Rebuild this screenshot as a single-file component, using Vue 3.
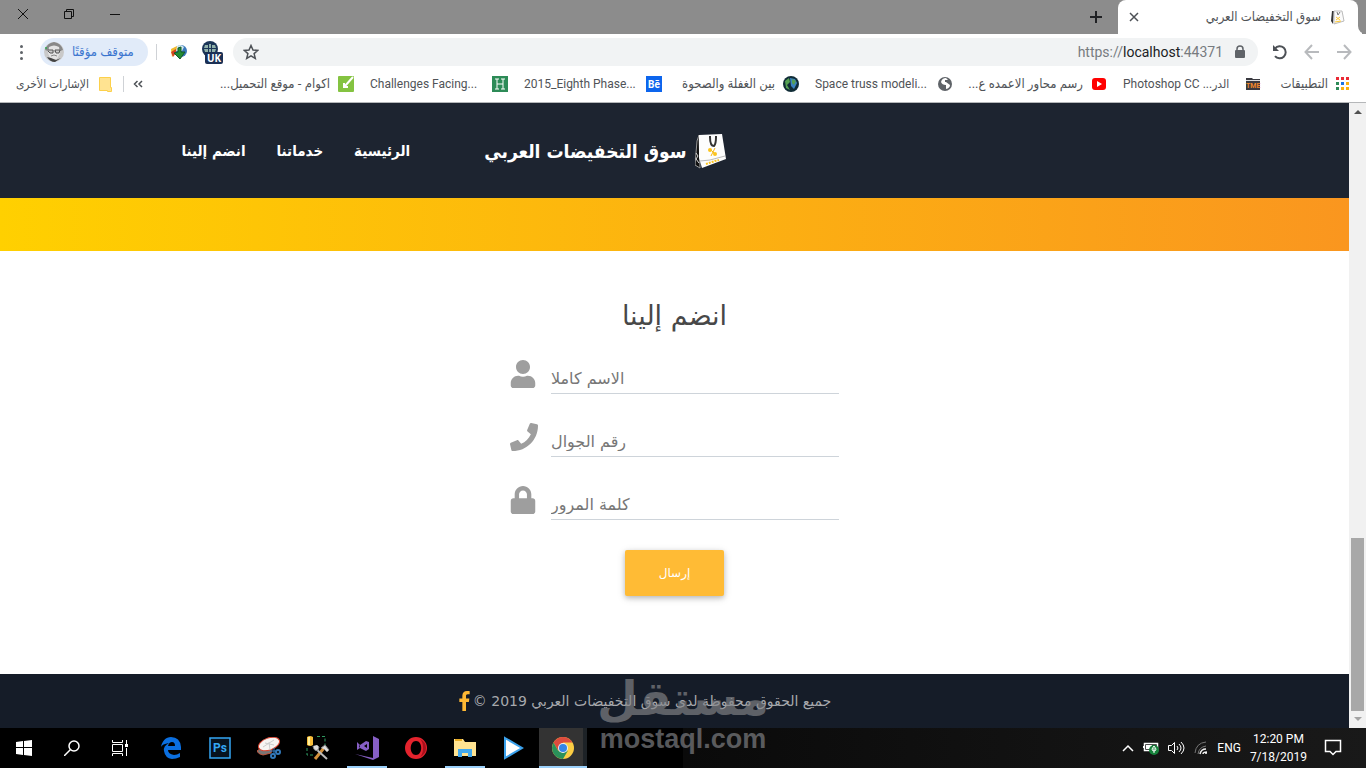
<script setup>
import { ref } from 'vue'

const bookmarks = [
  { label: 'اكوام - موقع التحميل...', icon: 'akoam', rtl: true },
  { label: 'Challenges Facing...', icon: 'hindawi' },
  { label: '2015_Eighth Phase...', icon: 'behance' },
  { label: 'بين الغفلة والصحوة', icon: 'earth', rtl: true },
  { label: 'Space truss modeli...', icon: 'globe' },
  { label: 'رسم محاور الاعمده ع...', icon: 'youtube', rtl: true },
  { label: 'Photoshop CC ...الدر', icon: 'tme' },
  { label: 'التطبيقات', icon: 'apps', rtl: true }
]
const appColors = ['#ea2a35', '#ea2a35', '#ea2a35', '#2d8b57', '#1a73e8', '#fbb010', '#2d8b57', '#fbb010', '#fbb010']

const nav = ['الرئيسية', 'خدماتنا', 'انضم إلينا']

const fields = [
  {
    id: 'full-name', label: 'الاسم كاملا', type: 'text', box: '0 0 448 512', narrow: true,
    path: 'M224 256c70.7 0 128-57.3 128-128S294.7 0 224 0 96 57.3 96 128s57.3 128 128 128zm89.6 32h-16.7c-22.2 10.2-46.9 16-72.9 16s-50.6-5.8-72.9-16h-16.7C60.2 288 0 348.2 0 422.4V464c0 26.5 21.5 48 48 48h352c26.5 0 48-21.5 48-48v-41.6c0-74.2-60.2-134.4-134.4-134.4z'
  },
  {
    id: 'mobile', label: 'رقم الجوال', type: 'tel', box: '0 0 512 512', narrow: false,
    path: 'M493.4 24.6l-104-24c-11.3-2.6-22.9 3.3-27.5 13.9l-48 112c-4.2 9.8-1.4 21.3 6.9 28l60.6 49.6c-36 76.7-98.9 140.5-177.2 177.2l-49.6-60.6c-6.8-8.3-18.2-11.1-28-6.9l-112 48C3.9 366.5-2 378.1.6 389.4l24 104C27.1 504.2 36.7 512 48 512c256.1 0 464-207.5 464-464 0-11.2-7.7-20.9-18.6-23.4z'
  },
  {
    id: 'password', label: 'كلمة المرور', type: 'password', box: '0 0 448 512', narrow: true,
    path: 'M400 224h-24v-72C376 68.2 307.8 0 224 0S72 68.2 72 152v72H48c-26.5 0-48 21.5-48 48v192c0 26.5 21.5 48 48 48h352c26.5 0 48-21.5 48-48V272c0-26.5-21.5-48-48-48zm-104 0H152v-72c0-39.7 32.3-72 72-72s72 32.3 72 72v72z'
  }
]
const values = ref({ 'full-name': '', mobile: '', password: '' })
</script>

<template>
  <div class="desktop">
    <div class="tabstrip">
      <div class="controls">
        <button aria-label="إغلاق"><svg width="12" height="12"><path d="M1 1l10 10M11 1L1 11" /></svg></button>
        <button aria-label="استعادة"><svg width="12" height="12"><path d="M1.500 3.500h7v7h-7zM3.500 3.500v-2h7v7h-2" /></svg></button>
        <button aria-label="تصغير"><svg width="12" height="12"><path d="M1 6.500h10" /></svg></button>
      </div>
      <button class="newtab" aria-label="علامة تبويب جديدة"><svg width="12" height="12"><path d="M6 0v12M0 6h12" /></svg></button>
      <div class="tab">
        <button class="tabclose" aria-label="إغلاق علامة التبويب"><svg width="10" height="10"><path d="M1 1l8 8M9 1L1 9" /></svg></button>
        <span class="tabtitle">سوق التخفيضات العربي</span>
        <svg class="favicon" width="16" height="16" viewBox="0 0 16 16"><path d="M2 2l-1 10 2 3 1-13z" fill="#333" /><path d="M4 2h8l2 10-10 3z" fill="#fafafa" stroke="#bbb" /><path d="M7 3l1 3 2-3" fill="none" stroke="#777" /><path d="M6 8l4 3M10 8l-4 3M5 13l6-1" stroke="#ffc933" /></svg>
      </div>
      <div class="tabend"></div>
    </div>

    <div class="toolbar">
      <button class="menu" aria-label="القائمة"><i></i><i></i><i></i></button>
      <button class="profile">
        <svg width="20" height="20" viewBox="0 0 20 20"><circle cx="10" cy="10" r="10" fill="#c9c9c9" /><path d="M1 8Q3 1 10 0q7 1 9 8l-3 1-2-4H7L4 9z" fill="#888" /><path d="M5 5q5-3 10 0l1 6-3 6-3 1-4-2-2-5z" fill="#e3e3e3" /><path d="M4 8h5v3H6L4 9M11 8h5l-1 3h-3z" fill="#ccc" stroke="#555" /><path d="M9 9h2M7 14q3-2 6 0" fill="none" stroke="#888" /><path d="M3 15q3 5 8 5l6-4-5 2-5-2z" fill="#444" /><circle cx="2" cy="6" r="1" fill="#35a853" /></svg>
        <span>متوقف مؤقتًا</span>
      </button>
      <span class="rule"></span>
      <svg class="idm" width="18" height="18" viewBox="0 0 18 18"><circle cx="11" cy="8" r="6" fill="#3978bc" /><path d="M6 4q4-4 8 0l-2 4H6z" fill="#cee7ed" /><path d="M1 6l6-3-1 6-4 5z" fill="#f2b92b" /><path d="M1 9l5-3v4l-3 4z" fill="#d24521" /><path d="M8 5l3-1v5h4l-5 7-6-6 4-1z" fill="#218b32" stroke="#15562a" /></svg>
      <div class="ukext">
        <svg width="18" height="18" viewBox="0 0 18 18"><circle cx="9" cy="9" r="8" fill="#1b3557" /><path d="M4 5h3v3H3zM8 4h2v4H8zM11 5h3l1 3h-4zM3 9h4v3H4zM8 9h2v3H8zM11 9h4l-1 3h-3z" fill="#8fb0a9" /></svg>
        <b>UK</b>
      </div>
      <div class="omnibox">
        <svg width="16" height="16" viewBox="0 0 16 16"><path d="M8 1.500l2 4.500 4.800.4-3.700 3.200 1.200 4.800L8 11.800l-4.300 2.600 1.200-4.800L1.200 6.400 6 6z" fill="none" stroke="#4d5156" stroke-width="1.500" /></svg>
        <span class="url">https://<b>localhost</b>:44371</span>
        <svg width="10" height="14" viewBox="0 0 10 14"><path d="M1 6h8v6H1z" fill="#5f6368" stroke="#5f6368" stroke-width="2" stroke-linejoin="round" /><path d="M2 6V4q0-3 3-3t3 3v2" fill="none" stroke="#5f6368" stroke-width="1.500" /></svg>
      </div>
      <div class="navicons">
        <button aria-label="إعادة تحميل"><svg width="16" height="16" viewBox="0 0 16 16"><path d="M3 4.500A6 6 0 1 1 3 12" stroke="#4d5156" stroke-width="2" fill="none" /><path d="M1 1v6h6z" fill="#4d5156" /></svg></button>
        <button aria-label="للأمام"><svg width="16" height="16" viewBox="0 0 16 16"><path d="M15 8H2M8 1L1.500 8 8 15" fill="none" stroke="#b8babd" stroke-width="2" /></svg></button>
        <button aria-label="للخلف"><svg width="16" height="16" viewBox="0 0 16 16"><path d="M1 8h13M8 1l6.500 7L8 15" fill="none" stroke="#b8babd" stroke-width="2" /></svg></button>
      </div>
    </div>

    <div class="bookmarks">
      <a class="other" href="#other"><span>الإشارات الأخرى</span><svg width="13" height="15" viewBox="0 0 13 15"><path d="M.5.5h11v10h1v4h-4v-1h-8z" fill="#ffe391" stroke="#fcd04b" /></svg></a>
      <span class="rule"></span>
      <button class="more" aria-label="المزيد"><svg width="10" height="8" viewBox="0 0 10 8"><path d="M4.500 1l-3 3 3 3M9 1L6 4l3 3" fill="none" stroke="#4d5156" stroke-width="1.500" /></svg></button>
      <div class="marks">
        <a v-for="b in bookmarks" :key="b.icon" href="#bookmark" :class="['mark', b.icon]">
          <span :class="{ rtl: b.rtl }">{{ b.label }}</span>
          <svg v-if="b.icon === 'akoam'" width="16" height="16"><rect width="16" height="16" rx="1" fill="#84c341" /><path d="M6 7v4h4M15 1L7 10" stroke="#fff" stroke-width="2" fill="none" /></svg>
          <svg v-else-if="b.icon === 'hindawi'" width="16" height="16"><rect width="16" height="16" fill="#2d8b57" /><path d="M5 3v10M11 3v10M5 8h6M3 3h4M9 3h4M3 13h4M9 13h4" stroke="#fff" /></svg>
          <svg v-else-if="b.icon === 'behance'" width="16" height="16"><rect width="16" height="16" fill="#0d65ed" /><text x="2" y="12" font-size="10" font-weight="700" fill="#fff">Bē</text></svg>
          <svg v-else-if="b.icon === 'earth'" width="16" height="16"><circle cx="8" cy="8" r="8" fill="#102c36" /><path d="M7 2l5 1 2 4-3 6-3-3z" fill="#3c83bf" /><path d="M2 5l4-3 1 4-3 3 3 5-4-2zM9 3l4 2-2 4-2-2z" fill="#55a052" /></svg>
          <svg v-else-if="b.icon === 'globe'" width="16" height="16"><circle cx="8" cy="8" r="7" fill="#5f6368" /><path d="M9 2q-4 0-5 4 1 3 5 3v4q4-1 4-4l-4-3H8V4h3" fill="#fff" /></svg>
          <svg v-else-if="b.icon === 'youtube'" width="16" height="16"><rect x="1" y="2" width="14" height="12" rx="3" fill="#f00" /><path d="M6 5l5 3-5 3z" fill="#fff" /></svg>
          <svg v-else-if="b.icon === 'tme'" width="16" height="16"><path d="M1 2h6l1 1h7v11H1z" fill="#3a3a40" /><path d="M1 4.500h14" stroke="#ddd" /><text x="1" y="12" font-size="7" font-weight="700" fill="#f0872b">TME</text></svg>
          <svg v-else width="14" height="14" viewBox="0 0 14 14"><rect v-for="(c, i) in appColors" :key="i" :x="(i % 3) * 5" :y="Math.floor(i / 3) * 5" width="3" height="3" :fill="c" /></svg>
        </a>
      </div>
    </div>

    <div class="viewport">
      <div class="page">
        <header class="sitehead" dir="rtl">
          <a class="brand" href="#home">
            <svg width="31" height="36" viewBox="0 0 31 36"><path d="M4 2L2 8 0 32l5 3z" fill="#111" stroke="#999" stroke-width="1" /><path d="M4 2L27 1l4 25-24 9-3-10z" fill="#fdfdfd" /><path d="M5 28l10-1 15-4" fill="none" stroke="#bbb" /><path d="M15 4q0 9 4 9 2-2 2-9M16 4h-2M20 4h2" fill="none" stroke="#333" stroke-width="2" /><path d="M15 16l6 6M20 15l-4 8" stroke="#f6b716" /><circle cx="15" cy="17" r="2" fill="#fbc51f" /><circle cx="20" cy="21" r="2" fill="#fbc51f" /><path d="M11 31l3-1 3-1 3-1 4-1" fill="none" stroke="#fbc51f" stroke-width="2" stroke-dasharray="2 1" /><path d="M1 20l2 3-2 3 3 4" stroke="#ddd" fill="none" /></svg>
            <span>سوق التخفيضات العربي</span>
          </a>
          <nav><a v-for="n in nav" :key="n" href="#section">{{ n }}</a></nav>
        </header>
        <div class="banner"></div>
        <main>
          <form @submit.prevent>
            <h1>انضم إلينا</h1>
            <div v-for="f in fields" :key="f.id" class="field">
              <label :for="f.id" :aria-label="f.label"><svg :width="f.narrow ? 26 : 28" height="28" :viewBox="f.box"><path :d="f.path" fill="#9e9e9e" /></svg></label>
              <input :id="f.id" v-model="values[f.id]" :type="f.type" :placeholder="f.label">
            </div>
            <button class="send" type="submit">إرسال</button>
          </form>
        </main>
        <footer>
          <a href="#facebook" aria-label="facebook"><svg width="11" height="20" viewBox="0 0 264 512"><path fill="#ffb934" d="M76.700 512V283H0v-91h76.700v-71.700C76.700 42.400 124.300 0 193.800 0c33.300 0 61.900 2.500 70.200 3.600V85h-48.200c-37.800 0-45.100 18-45.100 44.300V192H256l-11.700 91h-73.600v229" /></svg></a>
          <span dir="rtl">جميع الحقوق محفوظة لدى سوق التخفيضات العربي 2019 ©</span>
        </footer>
      </div>
      <div class="scrollbar">
        <svg width="8" height="4"><path d="M0 4l4-4 4 4z" fill="#505050" /></svg>
        <div class="thumb"></div>
        <svg width="8" height="4"><path d="M0 0l4 4 4-4z" fill="#a3a3a3" /></svg>
      </div>
    </div>

    <div class="taskbar">
      <div class="system">
        <button aria-label="Start"><svg width="16" height="16" fill="#fff"><path d="M0 2l7-1v6H0zM8 1l8-1v7H8zM0 8h7v7l-7-1zM8 8h8v8l-8-1z" /></svg></button>
        <button aria-label="Search"><svg width="16" height="16" fill="none" stroke="#fff" stroke-width="1.500"><circle cx="10" cy="6" r="5" /><path d="M6.500 9.500L0 16" /></svg></button>
        <button aria-label="Task view"><svg width="16" height="16" fill="none" stroke="#fff"><path d="M.5 0v2.500h10V0M.5 4.500h10v7H.500zM.5 16v-2.500h10V16M14.500 0v4M14.500 8v8" /><path d="M13 4h3v3h-3z" fill="#fff" stroke="none" /></svg></button>
      </div>
      <div class="apps">
        <button aria-label="Edge"><svg width="20" height="22" viewBox="0 0 20 22"><path d="M0 10C1 4 5 0 10 0q9 0 10 10v3H7q0 4 6 5 3 0 6-2v4q-4 2-8 2-7-1-8-8-1-5 5-8-7 1-8 4M7 9h7q0-4-3-4T7 9" fill="#0b6fe0" fill-rule="evenodd" /></svg></button>
        <button aria-label="Photoshop"><svg width="22" height="22"><rect x="1" y="1" width="20" height="20" fill="#07131f" stroke="#34a7f4" stroke-width="1.500" /><text x="4" y="15" font-size="12" font-weight="700" fill="#34a7f4">Ps</text></svg></button>
        <button aria-label="Snipping tool"><svg width="24" height="22" viewBox="0 0 24 22"><path d="M0 14l7-5 8 3-1 4-8 2q-5-1-6-4" fill="#777" stroke="#c0563e" /><ellipse cx="12" cy="7" rx="11" ry="6" transform="rotate(-20 12 7)" fill="#f7f4f2" stroke="#d7422f" /><path d="M6 10l11-7M12 5l1 8M8 6l9 2" stroke="#ccc" /><circle cx="16" cy="19" r="2" fill="none" stroke="#3279ba" stroke-width="2" /><circle cx="21" cy="15" r="2" fill="none" stroke="#3279ba" stroke-width="2" /><path d="M13 14h6M17 11v7" stroke="#3279ba" /></svg></button>
        <button aria-label="Tools"><svg width="24" height="24" viewBox="0 0 24 24"><path d="M1 1q3-2 6 0v8q-3 2-6 0z" fill="#f8bd3a" /><path d="M3 1v8" stroke="#fff09a" stroke-width="2" /><path d="M11 .5h8V9M1 12v7h6" fill="none" stroke="#2f9960" stroke-dasharray="3 2" /><path d="M9 23l9-11" stroke="#d4913c" stroke-width="3" /><path d="M10 13l11 10" stroke="#bbb" stroke-width="2" /><path d="M7 10q1 6 5 4l1-3-2-2M15 12l4-3 4 5-2 2-3-3" fill="#ddd" stroke="#888" /></svg></button>
        <button class="open" aria-label="Visual Studio"><svg width="24" height="24" viewBox="0 0 24 24" fill="none"><path d="M18 0l6 3v18l-6 3zM0 18l18 4v2z" fill="#865fc5" /><path d="M2 6v8l3-2 6 3 3-2V6l-3-1-6 4z" fill="#865fc5" /><path d="M4 9v3l1-2zM12 8l-3 2 3 2z" fill="#000" /></svg></button>
        <button aria-label="Opera"><svg width="22" height="22"><path d="M11 0a11 11 0 1 0 0 22 11 11 0 1 0 0-22M11 4c7 0 7 14 0 14S4 4 11 4" fill="#e4232d" fill-rule="evenodd" /><path d="M15 2q6 3 6 9t-6 9q3-3 3-9t-3-9" fill="#a70f1c" /></svg></button>
        <button class="open" aria-label="Explorer"><svg width="22" height="19" viewBox="0 0 22 19"><path d="M0 0h9l2 3h11v14H0z" fill="#ffe391" /><path d="M1 1h7" stroke="#e8ac25" stroke-width="2" /><path d="M4 18v-8h14v8h-4v-4H8v4z" fill="#42a9ee" /></svg></button>
        <button aria-label="Player"><svg width="24" height="24"><path d="M3 2l17 10L3 22z" fill="#fff" stroke="#3ba2ed" stroke-width="2" /></svg></button>
        <button class="open active" aria-label="Chrome"><svg width="22" height="22" viewBox="0 0 22 22"><circle cx="11" cy="11" r="11" fill="#fccd43" /><path d="M1.500 5.500A11 11 0 0 1 20.500 5.500H11L6.200 13.700z" fill="#dd4c3e" /><path d="M1.500 5.500A11 11 0 0 0 11 22l5-8.500-5 2-5-2z" fill="#2a915a" /><circle cx="11" cy="11" r="5" fill="#eee" /><circle cx="11" cy="11" r="4" fill="#3585e6" /></svg></button>
      </div>
      <div class="tray">
        <svg width="12" height="8"><path d="M1 7l5-5 5 5" fill="none" stroke="#fff" stroke-width="1.500" /></svg>
        <svg width="16" height="14"><path d="M1.500 2.500h13v7h-13zM0 5v2" fill="none" stroke="#fff" stroke-width="1.500" /><path d="M3 4h6v4H3z" fill="#fff" /><circle cx="11" cy="9" r="5" fill="#16823b" /><path d="M11 12V7M9 8q0 2 2 2 2 0 2-2l-2-3z" stroke="#fff" fill="none" /></svg>
        <svg width="17" height="14" fill="none" stroke="#fff"><path d="M.5 4.500h3l3-3v11l-3-3h-3zM9 5q2 2 0 4M11 3q4 4 0 8M13 1q6 6 0 12" /></svg>
        <svg width="14" height="14" fill="none"><path d="M1 12Q2 2 12 1M4 13Q5 6 12 5" stroke="#777" /><path d="M6 13q1-5 6-5M9 13q0-2 4-2" stroke="#eee" stroke-width="1.500" /><circle cx="12" cy="12" r="1" fill="#fff" /></svg>
        <span>ENG</span>
        <time>12:20 PM<br>7/18/2019</time>
        <svg width="18" height="18"><path d="M1.500 1.500h15v11H12l-3 3-3-3H1.500z" fill="none" stroke="#fff" stroke-width="1.500" /></svg>
      </div>
    </div>

    <div class="watermark"><strong dir="rtl">مستقل</strong><span>mostaql.com</span></div>
  </div>
</template>

<style>
body { margin: 0; background: #fff; }
</style>

<style scoped>
* { box-sizing: border-box; }
.desktop { position: relative; display: flex; flex-direction: column; min-height: 100vh; overflow: hidden; font: 12px/16px Roboto, "DejaVu Sans Condensed", sans-serif; color: #505357; }
button { padding: 0; border: 0; background: none; color: inherit; font: inherit; }
a { color: inherit; text-decoration: none; }
svg { display: block; flex: none; }
.rule { width: 1px; height: 16px; background: #cfd2d6; }

.tabstrip { display: flex; height: 34px; background: #8c8c8c; }
.controls { display: flex; flex: 1; height: 28px; }
.controls button { display: grid; place-items: center; width: 46px; }
.controls path { fill: none; stroke: #111; }
.newtab { width: 44px; display: grid; place-items: center; }
.newtab path { stroke: #202124; stroke-width: 2; }
.tab { display: flex; align-items: center; width: 240px; padding: 0 12px 0 11px; background: #fff; border-radius: 8px 8px 0 0; }
.tabclose path { stroke: #4d5156; stroke-width: 1.5; }
.tabtitle { flex: 1; text-align: right; font-size: 13px; }
.favicon { margin-left: 9px; }
.tabend { width: 8px; border-bottom-left-radius: 8px; box-shadow: -4px 4px 0 #fff; clip-path: inset(0); }

.toolbar { display: flex; align-items: center; height: 36px; padding: 0 14px 0 17px; }
.menu { display: grid; gap: 3px; width: 9px; justify-content: center; }
.menu i { width: 3px; height: 3px; border-radius: 50%; background: #5f6368; }
.profile { display: flex; align-items: center; gap: 8px; width: 108px; height: 28px; margin: 0 8px 0 14px; padding-left: 4px; border-radius: 14px; background: #e1ebf9; color: #3b75cf; font-size: 13px; white-space: nowrap; }
.idm { margin-left: 13px; }
.ukext { position: relative; width: 24px; height: 24px; margin: 0 8px 0 13px; }
.ukext b { position: absolute; left: 4px; top: 12px; width: 18px; height: 12px; border-radius: 2px; background: #1b3055; color: #fff; font: 700 10px/12px "Open Sans", sans-serif; text-align: center; }
.omnibox { display: flex; flex: 1; align-items: center; height: 28px; padding: 0 13px 0 10px; border-radius: 14px; background: #f1f3f4; }
.url { flex: 1; margin-right: 12px; text-align: right; font-size: 14px; line-height: 20px; color: #777b7f; }
.url b { font-weight: 400; color: #202124; }
.navicons { display: flex; gap: 16px; margin-left: 14px; }

.bookmarks { display: flex; align-items: center; height: 33px; padding: 0 16px 6px 14px; border-bottom: 1px solid #b5b7b9; white-space: nowrap; }
.bookmarks > * { margin-top: 2px; }
.other { display: flex; align-items: center; gap: 10px; margin-right: 11px; }
.other span { width: 75px; font-size: 12px; direction: rtl; }
.more { margin-left: 9px; }
.marks { display: flex; flex: 1; justify-content: flex-end; gap: 16px; }
.mark { display: flex; align-items: center; gap: 8px; }
.mark span { width: 114px; }
.mark.apps { flex: none; }
.mark.apps span { width: 51px; }
.mark.earth span { width: 97px; }
.mark .rtl { direction: rtl; font-size: 13px; }

.viewport { display: flex; flex: 1; }
.page { display: flex; flex: 1; flex-direction: column; font-family: "DejaVu Sans", sans-serif; }
.sitehead { display: flex; align-items: center; gap: 74px; height: 95px; padding-right: calc(46% + 2px); background: #1d2430; color: #fff; font-family: "DejaVu Sans Condensed", "DejaVu Sans", sans-serif; font-weight: 700; white-space: nowrap; }
.brand { display: flex; align-items: center; gap: 9px; font-size: 19px; line-height: 32px; }
nav { display: flex; gap: 31px; font-size: 15px; line-height: 24px; }
.banner { height: 53px; background: linear-gradient(90deg, #ffd000, #fa961f); }
main { flex: 1; background: #fff; }
form { display: flex; flex-direction: column; align-items: center; width: 329px; margin: 45px auto 30px; }
h1 { margin: 0 0 18px; font-size: 27px; line-height: 40px; font-weight: 400; color: #484848; }
.field { display: flex; width: 100%; height: 40px; margin-bottom: 23px; }
.field label { width: 41px; padding-top: 6px; }
.field input { flex: 1; min-width: 0; padding: 10px 0 0; border: 0; border-bottom: 1px solid #ced4da; border-radius: 0; outline: 0; background: none; font: 16px/24px "DejaVu Sans", sans-serif; }
.field input::placeholder { color: #777; opacity: 1; }
.send { width: 99px; height: 46px; margin-top: 7px; border-radius: 2px; background: #ffbb35; color: #fff; font-size: 12px; box-shadow: 0 2px 5px rgba(0, 0, 0, .2), 0 2px 10px rgba(0, 0, 0, .12); }
footer { display: flex; align-items: center; justify-content: center; gap: 3px; height: 54px; padding-right: 59px; background: #151c28; color: #a7a9ad; font-size: 14px; line-height: 24px; white-space: nowrap; }
.scrollbar { display: flex; flex-direction: column; align-items: center; justify-content: space-between; width: 17px; padding: 7px 0; background: #f1f1f1; }
.thumb { width: 13px; height: 173px; margin: auto 0 6px; background: #a8a8a8; }

.taskbar { display: flex; height: 40px; background: linear-gradient(90deg, #000 50%, #0a0a0a 50%, #191919); color: #fff; }
.system { display: flex; margin-right: 3px; }
.apps { display: flex; gap: 1px; flex: 1; }
.mark.apps { gap: 8px; }
.taskbar button { display: grid; place-items: center; width: 48px; height: 40px; }
.open { background: linear-gradient(#9bd0fa, #9bd0fa) center bottom / 40px 2px no-repeat; }
.apps .active { background: linear-gradient(#9bd0fa, #9bd0fa) center bottom / 48px 2px no-repeat, linear-gradient(90deg, #333 44px, #1d2226 44px); }
.tray { display: flex; align-items: center; gap: 9px; padding-right: 24px; }
.tray time { margin-right: 8px; text-align: center; line-height: 18px; }

.watermark { position: absolute; left: 50%; bottom: 15px; display: grid; justify-items: center; transform: translateX(-50%); color: #85868a; opacity: .65; pointer-events: none; }
.watermark strong { font: 700 47px/52px "DejaVu Sans", sans-serif; }
.watermark span { font: 700 27px/28px "Liberation Sans", sans-serif; }
</style>
